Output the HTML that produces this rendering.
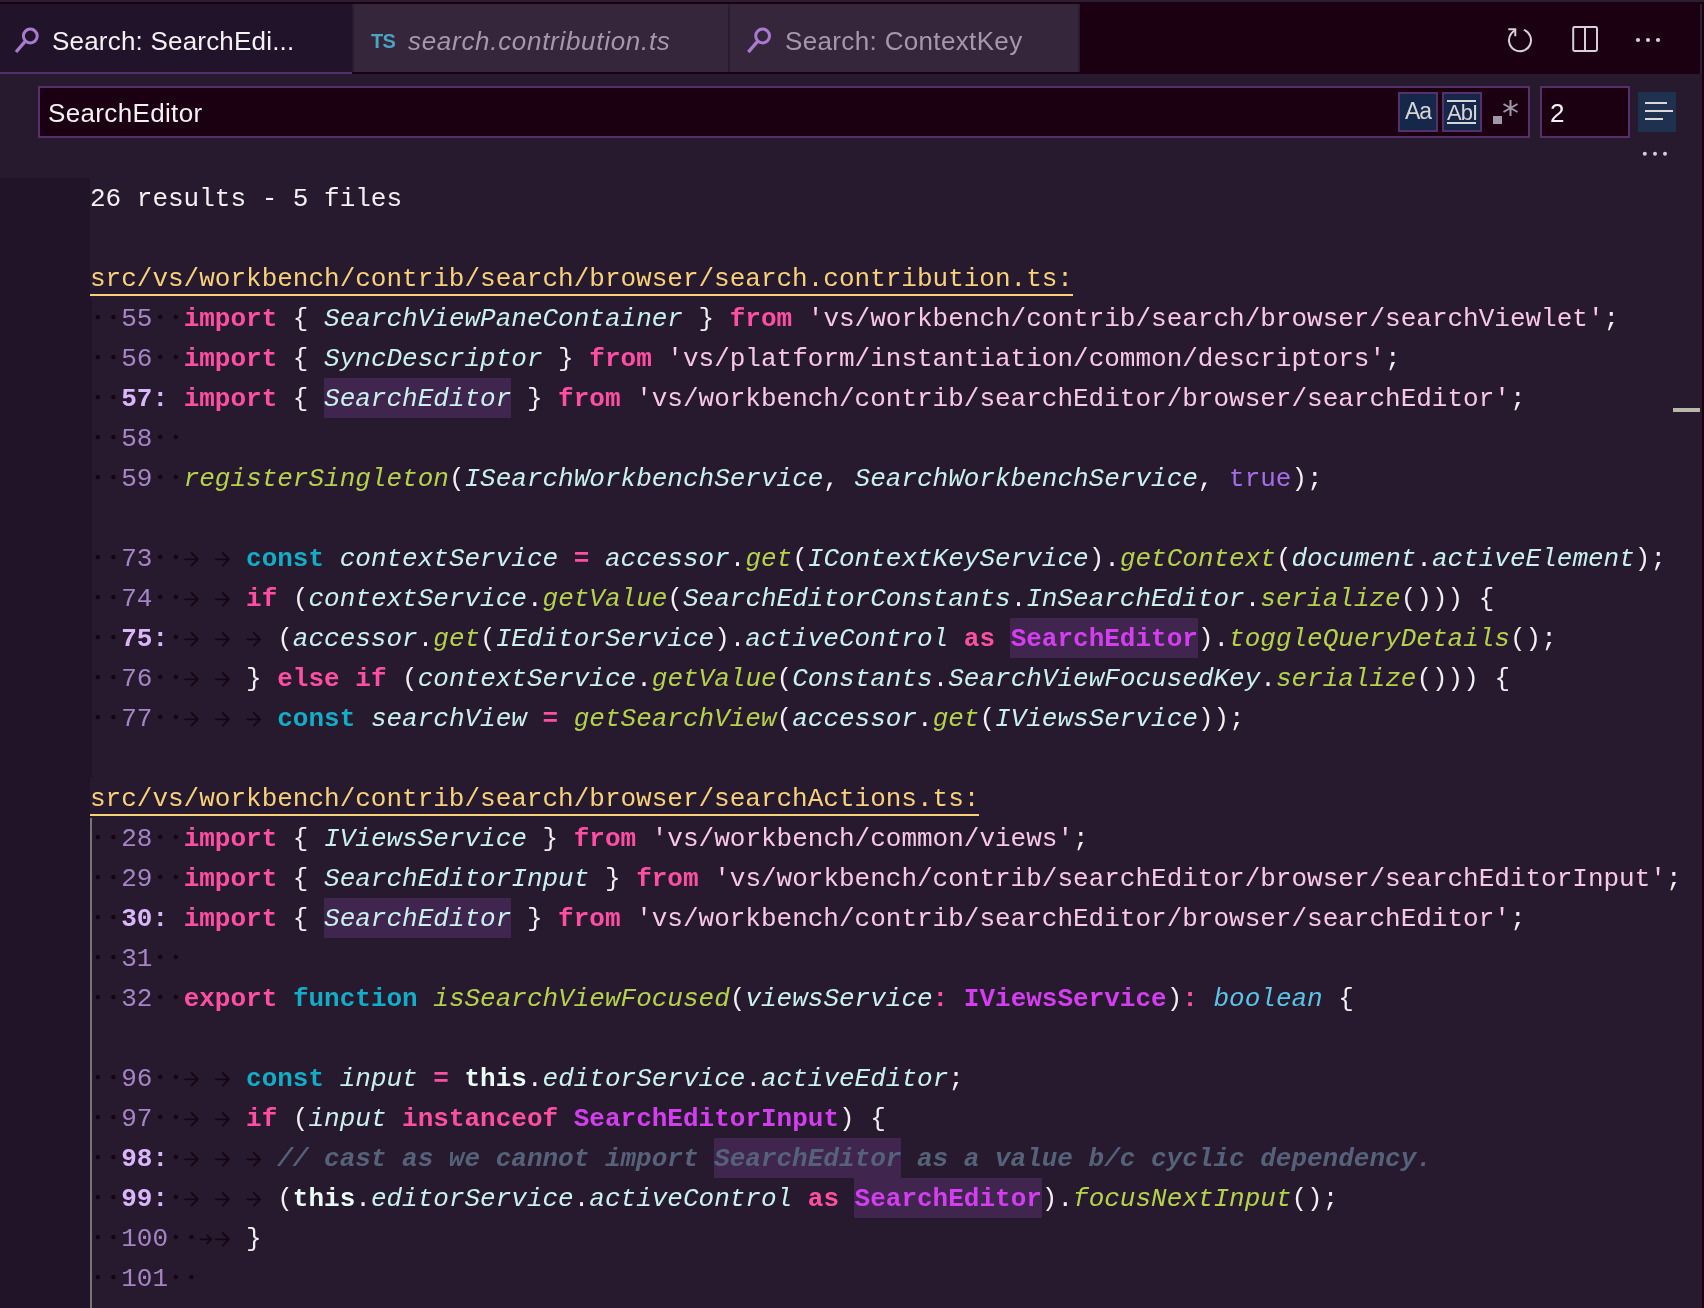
<!DOCTYPE html>
<html><head><meta charset="utf-8">
<style>
*{margin:0;padding:0;box-sizing:border-box}
html,body{width:1704px;height:1308px;overflow:hidden;background:#271a2e}
body{position:relative;font-family:"Liberation Sans",sans-serif}
.cl,.tabtxt{will-change:transform}
.abs{position:absolute}
#topline{left:0;top:0;width:1704px;height:2px;background:#2a1f31}
#tabbar{left:0;top:2px;width:1704px;height:72px;background:#1a0011}
.tab{position:absolute;top:4px;height:68px}
#tab1{left:0;width:352px;background:#21142a;border-bottom:2px solid #55306a;height:70px}
#tab1sep{left:352px;top:4px;width:2px;height:68px;background:#2a1d31}
#tab2{left:354px;width:374px;background:#35263c}
#tab2sep{left:728px;top:4px;width:2px;height:68px;background:#2a1d31}
#tab3{left:730px;width:348px;background:#35263c}
#tab3sep{left:1078px;top:4px;width:2px;height:68px;background:#2a1d31}
.tabtxt{position:absolute;font-size:26px;line-height:30px;white-space:pre}
#hdr{left:0;top:74px;width:1704px;height:104px;background:#271a2e}
#gutter{left:0;top:178px;width:90px;height:1130px;background:#211428}
#rstrip{left:1700px;top:4px;width:2px;height:70px;background:#2a2033}
#rstrip2{left:1702px;top:2px;width:2px;height:1306px;background:#1a0011}
.input{position:absolute;background:#1a0011;border:2px solid #55306a}
.btn{position:absolute;width:40px;height:40px;background:#16284a;border:2px solid #55306a}
.cl{position:absolute;left:90px;height:40px;line-height:40px;font-family:"Liberation Mono",monospace;font-size:26px;white-space:pre;color:#f2eef2}
.hl{position:absolute;height:40px;background:#40264f}
.ws{position:absolute;left:0;top:0}
.w{color:#f4f0f4}
.path{color:#f8d27a;}
.lnn{color:#a585c6}
.lnb{color:#dab6fa;font-weight:bold}
.kw{color:#ff4fa3;font-weight:bold}
.op{color:#ff4fa3;font-weight:bold}
.cy{color:#12adc6;font-weight:bold}
.fn{color:#b5d34a;font-style:italic}
.id{color:#c9f1ee;font-style:italic}
.p{color:#f2eef2}
.st{color:#f8c8e6}
.tr{color:#a46ee8}
.ty{color:#d43ef0;font-weight:bold}
.bl{color:#5ac4e6;font-style:italic}
.cm{color:#55627a;font-style:italic;font-weight:bold}
.this{color:#eafcf6;font-weight:bold}
</style></head><body>
<div id="topline" class="abs"></div>
<div id="tabbar" class="abs"></div>
<div id="tab1" class="tab"></div>
<div id="tab1sep" class="abs"></div>
<div id="tab2" class="tab"></div>
<div id="tab2sep" class="abs"></div>
<div id="tab3" class="tab"></div>
<div id="tab3sep" class="abs"></div>
<!-- tab1 content -->
<svg class="abs" style="left:0;top:0" width="1704" height="74">
  <g fill="none" stroke="#a87bd0" stroke-width="3">
    <circle cx="30.3" cy="36" r="6.9"/>
    <path d="M25.4 41.2L16 52" stroke-width="3.3"/>
    <circle cx="762.6" cy="36" r="6.9"/>
    <path d="M757.6 41.3L748.3 52.1" stroke-width="3.3"/>
  </g>
  <g fill="none" stroke="#d8d0d8" stroke-width="2">
    <path d="M1523.8 29.9A11 11 0 1 1 1511.2 33.6L1515.4 29.4"/>
    <path d="M1508.3 29.3H1515.3V36.2" stroke-linecap="butt"/>
    <rect x="1573.2" y="27.1" width="23.8" height="23.8" rx="1.3"/>
    <path d="M1585 27.5V50.5"/>
  </g>
  <g fill="#d8d0d8">
    <circle cx="1638" cy="40" r="2.1"/><circle cx="1648" cy="40" r="2.1"/><circle cx="1658" cy="40" r="2.1"/>
  </g>
</svg>
<div class="tabtxt" style="left:52px;top:26px;color:#f4f0f4;letter-spacing:0.2px">Search: SearchEdi...</div>
<div class="tabtxt" style="left:371px;top:26px;color:#4aa4c2;font-size:20px;font-weight:bold;letter-spacing:-0.6px">TS</div>
<div class="tabtxt" style="left:408px;top:26px;color:#a797ab;font-style:italic;letter-spacing:0.7px">search.contribution.ts</div>
<div class="tabtxt" style="left:785px;top:26px;color:#a797ab;letter-spacing:0.35px">Search: ContextKey</div>

<div id="hdr" class="abs"></div>
<div class="input" style="left:38px;top:86px;width:1492px;height:52px"></div>
<div class="tabtxt" style="left:48px;top:98px;color:#f4f0f4;letter-spacing:0.35px">SearchEditor</div>
<div class="btn" style="left:1398px;top:92px"></div>
<div class="btn" style="left:1442px;top:92px"></div>
<div class="tabtxt" style="left:1405px;top:96px;color:#d8d4d8;font-size:23px;letter-spacing:-1px">Aa</div>
<div class="tabtxt" style="left:1447px;top:98px;color:#d8d4d8;font-size:22px;letter-spacing:-1px">AbI</div>
<div class="abs" style="left:1447px;top:100px;width:29px;height:2px;background:#d8d4d8"></div>
<div class="abs" style="left:1447px;top:122px;width:29px;height:2px;background:#d8d4d8"></div>
<div class="abs" style="left:1493px;top:116px;width:9px;height:8px;background:#a098a8"></div>
<svg class="abs" style="left:1500px;top:96px" width="22" height="24"><g stroke="#a098a8" stroke-width="2"><path d="M10.5 4V20M3.5 8L17.5 16M3.5 16L17.5 8"/></g></svg>
<div class="input" style="left:1540px;top:86px;width:90px;height:52px"></div>
<div class="tabtxt" style="left:1550px;top:98px;color:#f4f0f4">2</div>
<div class="abs" style="left:1638px;top:92px;width:38px;height:40px;background:#1e3250"></div>
<div class="abs" style="left:1645px;top:102px;width:22px;height:2px;background:#dcd6dc"></div>
<div class="abs" style="left:1645px;top:110px;width:28px;height:2px;background:#dcd6dc"></div>
<div class="abs" style="left:1645px;top:118px;width:18px;height:2px;background:#dcd6dc"></div>
<svg class="abs" style="left:1630px;top:144px" width="50" height="20"><g fill="#d8d0d8"><circle cx="14.8" cy="9.8" r="2"/><circle cx="25" cy="9.8" r="2"/><circle cx="35" cy="9.8" r="2"/></g></svg>

<div id="gutter" class="abs"></div>
<div class="abs" style="left:90px;top:294px;width:983px;height:2px;background:#f8d27a"></div>
<div class="abs" style="left:90px;top:298px;width:2px;height:480px;background:#211428"></div>
<div class="abs" style="left:90px;top:814px;width:889px;height:2px;background:#f8d27a"></div>
<div class="hl" style="left:324.0px;top:378px;width:187.2px"></div><div class="hl" style="left:1010.4px;top:618px;width:187.2px"></div><div class="hl" style="left:324.0px;top:898px;width:187.2px"></div><div class="hl" style="left:714.0px;top:1138px;width:187.2px"></div><div class="hl" style="left:854.4px;top:1178px;width:187.2px"></div>
<svg class="ws" width="1704" height="1308"><g fill="#180412" stroke="none"><circle cx="97.8" cy="317.0" r="2.3"/><circle cx="113.4" cy="317.0" r="2.3"/><circle cx="160.2" cy="317.0" r="2.3"/><circle cx="175.8" cy="317.0" r="2.3"/><circle cx="97.8" cy="357.0" r="2.3"/><circle cx="113.4" cy="357.0" r="2.3"/><circle cx="160.2" cy="357.0" r="2.3"/><circle cx="175.8" cy="357.0" r="2.3"/><circle cx="97.8" cy="397.0" r="2.3"/><circle cx="113.4" cy="397.0" r="2.3"/><circle cx="97.8" cy="437.0" r="2.3"/><circle cx="113.4" cy="437.0" r="2.3"/><circle cx="160.2" cy="437.0" r="2.3"/><circle cx="175.8" cy="437.0" r="2.3"/><circle cx="97.8" cy="477.0" r="2.3"/><circle cx="113.4" cy="477.0" r="2.3"/><circle cx="160.2" cy="477.0" r="2.3"/><circle cx="175.8" cy="477.0" r="2.3"/><circle cx="97.8" cy="557.0" r="2.3"/><circle cx="113.4" cy="557.0" r="2.3"/><circle cx="160.2" cy="557.0" r="2.3"/><circle cx="175.8" cy="557.0" r="2.3"/><circle cx="97.8" cy="597.0" r="2.3"/><circle cx="113.4" cy="597.0" r="2.3"/><circle cx="160.2" cy="597.0" r="2.3"/><circle cx="175.8" cy="597.0" r="2.3"/><circle cx="97.8" cy="637.0" r="2.3"/><circle cx="113.4" cy="637.0" r="2.3"/><circle cx="175.8" cy="637.0" r="2.3"/><circle cx="97.8" cy="677.0" r="2.3"/><circle cx="113.4" cy="677.0" r="2.3"/><circle cx="160.2" cy="677.0" r="2.3"/><circle cx="175.8" cy="677.0" r="2.3"/><circle cx="97.8" cy="717.0" r="2.3"/><circle cx="113.4" cy="717.0" r="2.3"/><circle cx="160.2" cy="717.0" r="2.3"/><circle cx="175.8" cy="717.0" r="2.3"/><circle cx="97.8" cy="837.0" r="2.3"/><circle cx="113.4" cy="837.0" r="2.3"/><circle cx="160.2" cy="837.0" r="2.3"/><circle cx="175.8" cy="837.0" r="2.3"/><circle cx="97.8" cy="877.0" r="2.3"/><circle cx="113.4" cy="877.0" r="2.3"/><circle cx="160.2" cy="877.0" r="2.3"/><circle cx="175.8" cy="877.0" r="2.3"/><circle cx="97.8" cy="917.0" r="2.3"/><circle cx="113.4" cy="917.0" r="2.3"/><circle cx="97.8" cy="957.0" r="2.3"/><circle cx="113.4" cy="957.0" r="2.3"/><circle cx="160.2" cy="957.0" r="2.3"/><circle cx="175.8" cy="957.0" r="2.3"/><circle cx="97.8" cy="997.0" r="2.3"/><circle cx="113.4" cy="997.0" r="2.3"/><circle cx="160.2" cy="997.0" r="2.3"/><circle cx="175.8" cy="997.0" r="2.3"/><circle cx="97.8" cy="1077.0" r="2.3"/><circle cx="113.4" cy="1077.0" r="2.3"/><circle cx="160.2" cy="1077.0" r="2.3"/><circle cx="175.8" cy="1077.0" r="2.3"/><circle cx="97.8" cy="1117.0" r="2.3"/><circle cx="113.4" cy="1117.0" r="2.3"/><circle cx="160.2" cy="1117.0" r="2.3"/><circle cx="175.8" cy="1117.0" r="2.3"/><circle cx="97.8" cy="1157.0" r="2.3"/><circle cx="113.4" cy="1157.0" r="2.3"/><circle cx="175.8" cy="1157.0" r="2.3"/><circle cx="97.8" cy="1197.0" r="2.3"/><circle cx="113.4" cy="1197.0" r="2.3"/><circle cx="175.8" cy="1197.0" r="2.3"/><circle cx="97.8" cy="1237.0" r="2.3"/><circle cx="113.4" cy="1237.0" r="2.3"/><circle cx="175.8" cy="1237.0" r="2.3"/><circle cx="191.4" cy="1237.0" r="2.3"/><circle cx="97.8" cy="1277.0" r="2.3"/><circle cx="113.4" cy="1277.0" r="2.3"/><circle cx="175.8" cy="1277.0" r="2.3"/><circle cx="191.4" cy="1277.0" r="2.3"/></g><g fill="none" stroke="#180412" stroke-width="1.8" stroke-linecap="round" stroke-linejoin="round"><path d="M184.8 559.3H197.8M191.5 553.0L197.8 559.3L191.5 565.6"/><path d="M216.0 559.3H229.0M222.7 553.0L229.0 559.3L222.7 565.6"/><path d="M184.8 599.3H197.8M191.5 593.0L197.8 599.3L191.5 605.6"/><path d="M216.0 599.3H229.0M222.7 593.0L229.0 599.3L222.7 605.6"/><path d="M184.8 639.3H197.8M191.5 633.0L197.8 639.3L191.5 645.6"/><path d="M216.0 639.3H229.0M222.7 633.0L229.0 639.3L222.7 645.6"/><path d="M247.2 639.3H260.2M253.9 633.0L260.2 639.3L253.9 645.6"/><path d="M184.8 679.3H197.8M191.5 673.0L197.8 679.3L191.5 685.6"/><path d="M216.0 679.3H229.0M222.7 673.0L229.0 679.3L222.7 685.6"/><path d="M184.8 719.3H197.8M191.5 713.0L197.8 719.3L191.5 725.6"/><path d="M216.0 719.3H229.0M222.7 713.0L229.0 719.3L222.7 725.6"/><path d="M247.2 719.3H260.2M253.9 713.0L260.2 719.3L253.9 725.6"/><path d="M184.8 1079.3H197.8M191.5 1073.0L197.8 1079.3L191.5 1085.6"/><path d="M216.0 1079.3H229.0M222.7 1073.0L229.0 1079.3L222.7 1085.6"/><path d="M184.8 1119.3H197.8M191.5 1113.0L197.8 1119.3L191.5 1125.6"/><path d="M216.0 1119.3H229.0M222.7 1113.0L229.0 1119.3L222.7 1125.6"/><path d="M184.8 1159.3H197.8M191.5 1153.0L197.8 1159.3L191.5 1165.6"/><path d="M216.0 1159.3H229.0M222.7 1153.0L229.0 1159.3L222.7 1165.6"/><path d="M247.2 1159.3H260.2M253.9 1153.0L260.2 1159.3L253.9 1165.6"/><path d="M184.8 1199.3H197.8M191.5 1193.0L197.8 1199.3L191.5 1205.6"/><path d="M216.0 1199.3H229.0M222.7 1193.0L229.0 1199.3L222.7 1205.6"/><path d="M247.2 1199.3H260.2M253.9 1193.0L260.2 1199.3L253.9 1205.6"/><path d="M200.7 1239.3H211.2M207.2 1235.3L211.2 1239.3L207.2 1243.3"/><path d="M216.0 1239.3H229.0M222.7 1233.0L229.0 1239.3L222.7 1245.6"/></g></svg>
<div class="cl" style="top:179px"><span class="w">26 results - 5 files</span></div>
<div class="cl" style="top:219px"></div>
<div class="cl" style="top:259px"><span class="path">src/vs/workbench/contrib/search/browser/search.contribution.ts:</span></div>
<div class="cl" style="top:299px"><span class="lnn">  55</span>  <span class="kw">import</span><span class="p"> { </span><span class="id">SearchViewPaneContainer</span><span class="p"> } </span><span class="kw">from</span><span class="p"> </span><span class="st">&#x27;vs/workbench/contrib/search/browser/searchViewlet&#x27;</span><span class="p">;</span></div>
<div class="cl" style="top:339px"><span class="lnn">  56</span>  <span class="kw">import</span><span class="p"> { </span><span class="id">SyncDescriptor</span><span class="p"> } </span><span class="kw">from</span><span class="p"> </span><span class="st">&#x27;vs/platform/instantiation/common/descriptors&#x27;</span><span class="p">;</span></div>
<div class="cl" style="top:379px"><span class="lnb">  57:</span><span class="p"> </span><span class="kw">import</span><span class="p"> { </span><span class="id">SearchEditor</span><span class="p"> } </span><span class="kw">from</span><span class="p"> </span><span class="st">&#x27;vs/workbench/contrib/searchEditor/browser/searchEditor&#x27;</span><span class="p">;</span></div>
<div class="cl" style="top:419px"><span class="lnn">  58</span>  </div>
<div class="cl" style="top:459px"><span class="lnn">  59</span>  <span class="fn">registerSingleton</span><span class="p">(</span><span class="id">ISearchWorkbenchService</span><span class="p">, </span><span class="id">SearchWorkbenchService</span><span class="p">, </span><span class="tr">true</span><span class="p">);</span></div>
<div class="cl" style="top:499px"></div>
<div class="cl" style="top:539px"><span class="lnn">  73</span>      <span class="cy">const</span><span class="p"> </span><span class="id">contextService</span><span class="p"> </span><span class="op">=</span><span class="p"> </span><span class="id">accessor</span><span class="p">.</span><span class="fn">get</span><span class="p">(</span><span class="id">IContextKeyService</span><span class="p">).</span><span class="fn">getContext</span><span class="p">(</span><span class="id">document</span><span class="p">.</span><span class="id">activeElement</span><span class="p">);</span></div>
<div class="cl" style="top:579px"><span class="lnn">  74</span>      <span class="kw">if</span><span class="p"> (</span><span class="id">contextService</span><span class="p">.</span><span class="fn">getValue</span><span class="p">(</span><span class="id">SearchEditorConstants</span><span class="p">.</span><span class="id">InSearchEditor</span><span class="p">.</span><span class="fn">serialize</span><span class="p">())) {</span></div>
<div class="cl" style="top:619px"><span class="lnb">  75:</span>       <span class="p">(</span><span class="id">accessor</span><span class="p">.</span><span class="fn">get</span><span class="p">(</span><span class="id">IEditorService</span><span class="p">).</span><span class="id">activeControl</span><span class="p"> </span><span class="kw">as</span><span class="p"> </span><span class="ty">SearchEditor</span><span class="p">).</span><span class="fn">toggleQueryDetails</span><span class="p">();</span></div>
<div class="cl" style="top:659px"><span class="lnn">  76</span>      <span class="p">} </span><span class="kw">else</span><span class="p"> </span><span class="kw">if</span><span class="p"> (</span><span class="id">contextService</span><span class="p">.</span><span class="fn">getValue</span><span class="p">(</span><span class="id">Constants</span><span class="p">.</span><span class="id">SearchViewFocusedKey</span><span class="p">.</span><span class="fn">serialize</span><span class="p">())) {</span></div>
<div class="cl" style="top:699px"><span class="lnn">  77</span>        <span class="cy">const</span><span class="p"> </span><span class="id">searchView</span><span class="p"> </span><span class="op">=</span><span class="p"> </span><span class="fn">getSearchView</span><span class="p">(</span><span class="id">accessor</span><span class="p">.</span><span class="fn">get</span><span class="p">(</span><span class="id">IViewsService</span><span class="p">));</span></div>
<div class="cl" style="top:739px"></div>
<div class="cl" style="top:779px"><span class="path">src/vs/workbench/contrib/search/browser/searchActions.ts:</span></div>
<div class="cl" style="top:819px"><span class="lnn">  28</span>  <span class="kw">import</span><span class="p"> { </span><span class="id">IViewsService</span><span class="p"> } </span><span class="kw">from</span><span class="p"> </span><span class="st">&#x27;vs/workbench/common/views&#x27;</span><span class="p">;</span></div>
<div class="cl" style="top:859px"><span class="lnn">  29</span>  <span class="kw">import</span><span class="p"> { </span><span class="id">SearchEditorInput</span><span class="p"> } </span><span class="kw">from</span><span class="p"> </span><span class="st">&#x27;vs/workbench/contrib/searchEditor/browser/searchEditorInput&#x27;</span><span class="p">;</span></div>
<div class="cl" style="top:899px"><span class="lnb">  30:</span><span class="p"> </span><span class="kw">import</span><span class="p"> { </span><span class="id">SearchEditor</span><span class="p"> } </span><span class="kw">from</span><span class="p"> </span><span class="st">&#x27;vs/workbench/contrib/searchEditor/browser/searchEditor&#x27;</span><span class="p">;</span></div>
<div class="cl" style="top:939px"><span class="lnn">  31</span>  </div>
<div class="cl" style="top:979px"><span class="lnn">  32</span>  <span class="kw">export</span><span class="p"> </span><span class="cy">function</span><span class="p"> </span><span class="fn">isSearchViewFocused</span><span class="p">(</span><span class="id">viewsService</span><span class="op">:</span><span class="p"> </span><span class="ty">IViewsService</span><span class="p">)</span><span class="op">:</span><span class="p"> </span><span class="bl">boolean</span><span class="p"> {</span></div>
<div class="cl" style="top:1019px"></div>
<div class="cl" style="top:1059px"><span class="lnn">  96</span>      <span class="cy">const</span><span class="p"> </span><span class="id">input</span><span class="p"> </span><span class="op">=</span><span class="p"> </span><span class="this">this</span><span class="p">.</span><span class="id">editorService</span><span class="p">.</span><span class="id">activeEditor</span><span class="p">;</span></div>
<div class="cl" style="top:1099px"><span class="lnn">  97</span>      <span class="kw">if</span><span class="p"> (</span><span class="id">input</span><span class="p"> </span><span class="kw">instanceof</span><span class="p"> </span><span class="ty">SearchEditorInput</span><span class="p">) {</span></div>
<div class="cl" style="top:1139px"><span class="lnb">  98:</span>       <span class="cm">// cast as we cannot import </span><span class="cm">SearchEditor</span><span class="cm"> as a value b/c cyclic dependency.</span></div>
<div class="cl" style="top:1179px"><span class="lnb">  99:</span>       <span class="p">(</span><span class="this">this</span><span class="p">.</span><span class="id">editorService</span><span class="p">.</span><span class="id">activeControl</span><span class="p"> </span><span class="kw">as</span><span class="p"> </span><span class="ty">SearchEditor</span><span class="p">).</span><span class="fn">focusNextInput</span><span class="p">();</span></div>
<div class="cl" style="top:1219px"><span class="lnn">  100</span>     <span class="p">}</span></div>
<div class="cl" style="top:1259px"><span class="lnn">  101</span>  </div>
<div class="cl" style="top:1299px"></div>
<div class="abs" style="left:90px;top:818px;width:2px;height:490px;background:#7a747a"></div>
<div class="abs" style="left:1673px;top:408px;width:27px;height:4px;background:#b8b8a8"></div>
<div id="rstrip" class="abs"></div>
<div id="rstrip2" class="abs"></div>
</body></html>
